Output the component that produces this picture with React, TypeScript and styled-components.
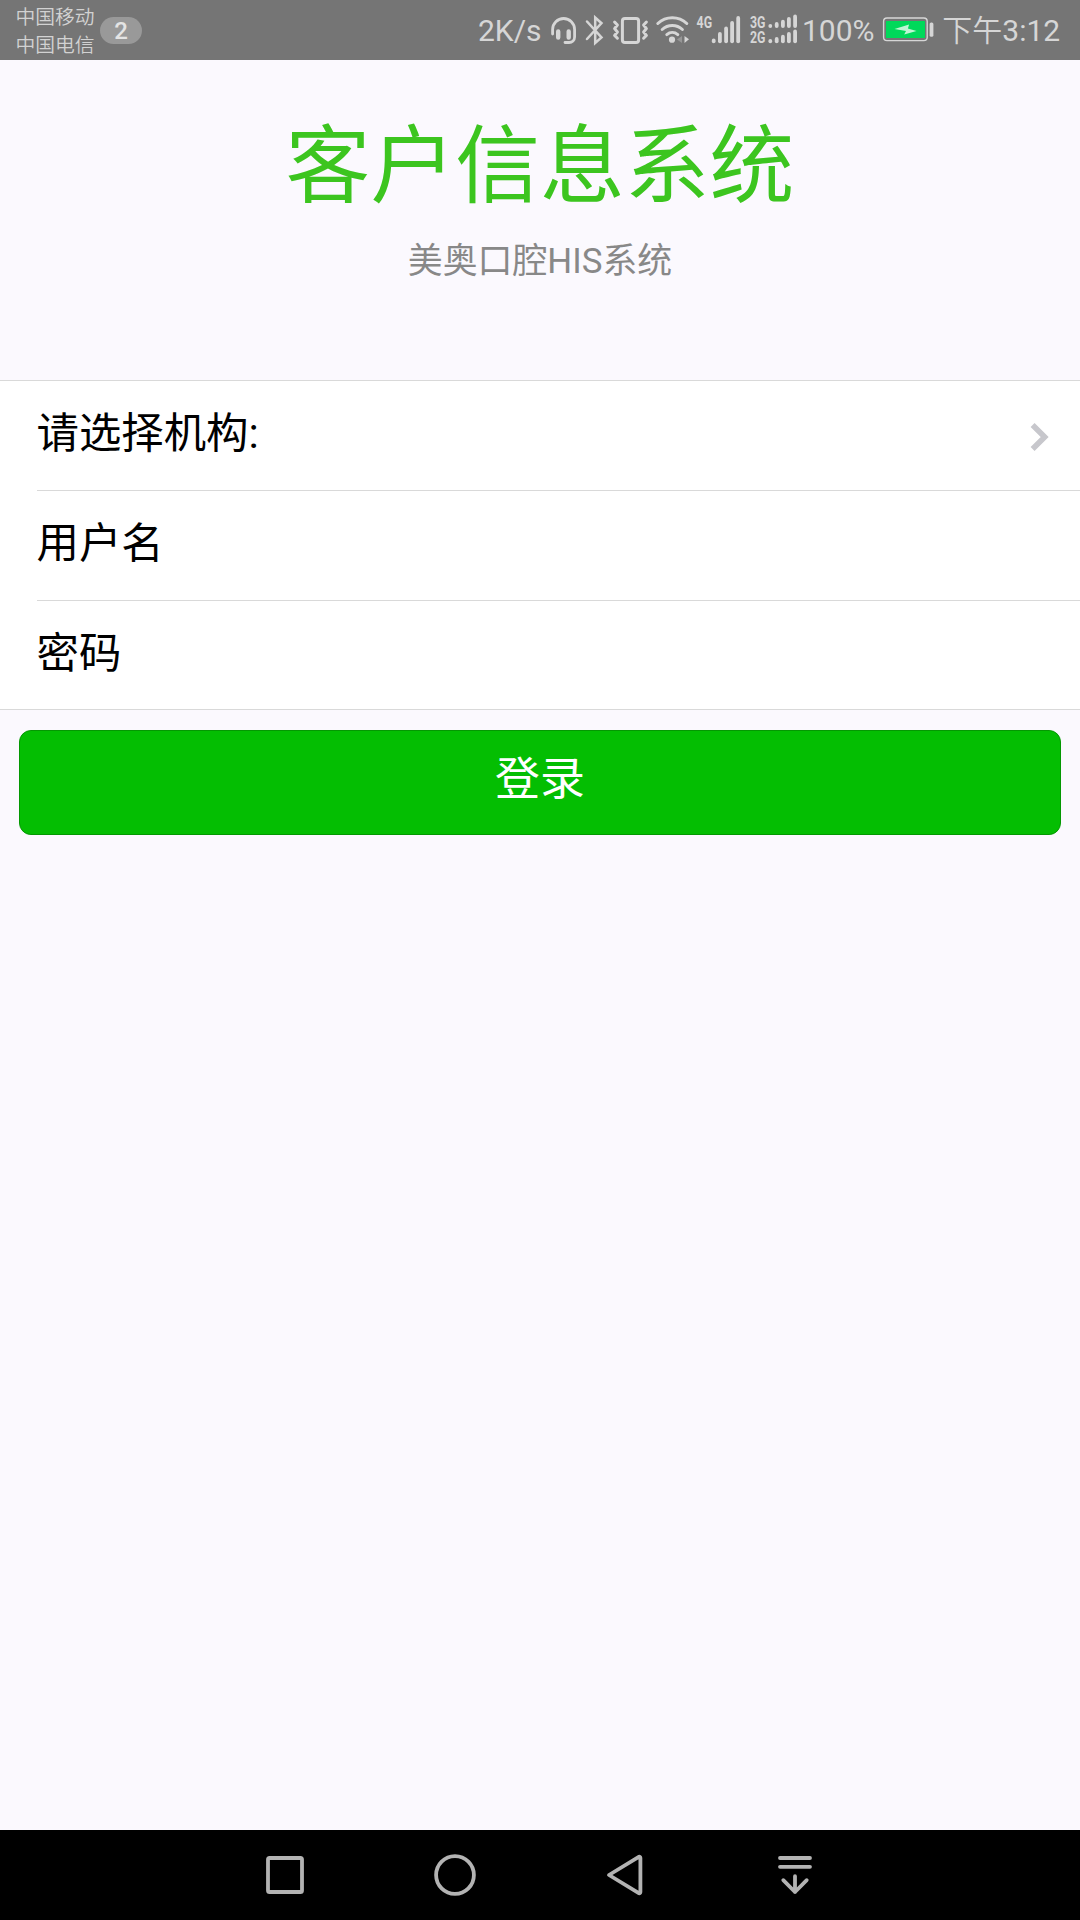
import React from "react";
import styled, { createGlobalStyle } from "styled-components";

const GlobalStyle = createGlobalStyle`
  * { box-sizing: border-box; }
  html, body { margin: 0; padding: 0; background: #fbf9fe; }
  body { font-family: Roboto, "Noto Sans CJK SC", sans-serif; font-weight: 400; }
`;

const Screen = styled.div`
  width: 1080px;
  height: 1920px;
  display: flex;
  flex-direction: column;
  overflow: hidden;
  background: #fbf9fe;
`;

const StatusBar = styled.header`
  height: 60px;
  flex: none;
  display: flex;
  align-items: center;
  background: #757575;
  color: #d6d6d6;
`;

const Carriers = styled.div`
  width: 85px;
  padding: 4px 0 0 15.5px;
  flex: none;
  font-size: 19.8px;
  line-height: 28px;
  font-weight: 350;
  white-space: nowrap;
  color: #d2d2d2;
`;

const CountPill = styled.span`
  width: 42px;
  height: 27px;
  margin-left: 15px;
  border-radius: 14px;
  background: #999;
  color: #e4e4e4;
  font-size: 24px;
  font-weight: 500;
  line-height: 29px;
  text-align: center;
`;

const Indicators = styled.div`
  margin-left: auto;
  width: 602px;
  display: flex;
  align-items: center;
`;

const StatusText = styled.span<{ $width: number; $gap?: number; $light?: boolean }>`
  width: ${(p) => p.$width}px;
  margin-left: ${(p) => p.$gap ?? 0}px;
  flex: none;
  padding-top: 1px;
  font-size: 30px;
  line-height: 60px;
  font-weight: ${(p) => (p.$light ? 350 : 400)};
  white-space: nowrap;
`;

const Digits = styled.span`
  font-weight: 400;
`;

const StatusIcon = styled.svg<{ $gap?: number }>`
  flex: none;
  margin-left: ${(p) => p.$gap ?? 0}px;
  color: #d6d6d6;
  font-family: Roboto, sans-serif;
  font-weight: 700;
`;

const Page = styled.main`
  flex: 1;
  display: flex;
  flex-direction: column;
`;

const Heading = styled.div`
  height: 320px;
  padding-top: 57px;
  text-align: center;
`;

const Title = styled.h1`
  margin: 0;
  font-size: 84.8px;
  line-height: 100px;
  font-weight: 400;
  color: #3cc51f;
`;

const Subtitle = styled.p`
  margin: 19px 0 0;
  font-size: 34.9px;
  line-height: 52px;
  color: #888;
`;

const Cells = styled.div`
  background: #fff;
  border-top: 1px solid #d9d9d9;
  border-bottom: 1px solid #d9d9d9;
`;

const Cell = styled.div<{ $height: number; $divided?: boolean }>`
  height: ${(p) => p.$height}px;
  margin-left: 36.5px;
  padding-right: 30.5px;
  display: flex;
  align-items: center;
  justify-content: space-between;
  border-bottom: ${(p) => (p.$divided ? "1px solid #d9d9d9" : "none")};
`;

const Label = styled.span`
  font-size: 42.4px;
  line-height: 60px;
  padding-bottom: 3px;
  color: #000;
`;

const Chevron = styled.svg`
  margin-top: 3px;
`;

const LoginButton = styled.button`
  height: 105px;
  margin: 20px 19px 0;
  padding: 0 0 5px;
  border: 1px solid #049802;
  border-radius: 12px;
  background: #04be02;
  color: #fff;
  font-family: inherit;
  font-weight: 400;
  font-size: 44.9px;
  line-height: 60px;
`;

const NavBar = styled.nav`
  height: 90px;
  flex: none;
  display: flex;
  justify-content: center;
  background: #000;
`;

const NavItem = styled.div`
  width: 170px;
  display: flex;
  align-items: center;
  justify-content: center;
  color: #b3b3b3;
`;

const NavIcon: React.FC<{ children: React.ReactNode }> = ({ children }) => (
  <NavItem>
    <svg width="48" height="48" viewBox="-24 -24 48 48" fill="none" stroke="currentColor" strokeWidth="3.8" strokeLinejoin="round" strokeLinecap="round">
      {children}
    </svg>
  </NavItem>
);

type Bar = [x: number, top: number];

const Bars: React.FC<{ bars: Bar[]; bottom: number; width: number }> = ({ bars, bottom, width }) => (
  <g fill="currentColor">
    {bars.map(([x, top]) => (
      <rect key={x} x={x} y={top} width={width} height={bottom - top} rx={width / 2} />
    ))}
  </g>
);

export default function App() {
  return (
    <>
      <GlobalStyle />
      <Screen>
        <StatusBar>
          <Carriers>
            <div>中国移动</div>
            <div>中国电信</div>
          </Carriers>
          <CountPill>2</CountPill>
          <Indicators>
            <StatusText $width={72}>2K/s</StatusText>
            <StatusIcon width="28" height="60" viewBox="550 0 28 60" fill="none" stroke="currentColor" strokeWidth="2.8" strokeLinecap="round">
              <path d="M552.6 34V29.5a11 11 0 0 1 22 0V37a5.5 5.5 0 0 1-5.5 5.5H565" />
              <path d="M558.2 31.5v6M568.7 31.5v6" strokeWidth="4.4" />
            </StatusIcon>
            <StatusIcon $gap={6} width="22" height="60" viewBox="584 0 22 60" fill="none" stroke="currentColor" strokeWidth="2.5" strokeLinecap="round" strokeLinejoin="miter">
              <path d="M587 21.5L601.5 37.5L595.2 43V17.5L601.5 23.2L587 39" />
            </StatusIcon>
            <StatusIcon $gap={6} width="37" height="60" viewBox="612 0 37 60" fill="none" stroke="currentColor" strokeWidth="3" strokeLinecap="round" strokeLinejoin="round">
              <rect x="622.4" y="18.4" width="16.2" height="24.2" rx="2.6" />
              <path d="M614.6 22l2.8 3-2.8 3.6 2.8 3.4-2.8 3.4 2.8 2.8M646.4 22l-2.8 3 2.8 3.6-2.8 3.4 2.8 3.4-2.8 2.8" />
            </StatusIcon>
            <StatusIcon $gap={6} width="36" height="60" viewBox="655 0 36 60" fill="none" stroke="currentColor" strokeWidth="3" strokeLinecap="round">
              <path d="M657.8 23.5a21 21 0 0 1 29 0M662.2 29.5a15 15 0 0 1 20.2 0M666.8 34.6a8.6 8.6 0 0 1 11 0" />
              <circle cx="672" cy="39.7" r="3.1" fill="currentColor" stroke="none" />
              <path d="M682 36v7l-5-3.5z" fill="#969696" stroke="none" />
              <path d="M684.5 36v7l4.5-3.8z" fill="currentColor" stroke="none" />
            </StatusIcon>
            <StatusIcon $gap={4} width="47" height="60" viewBox="695 0 47 60">
              <text x="696.6" y="28" fontSize="16.5" fill="currentColor" textLength="15.5" lengthAdjust="spacingAndGlyphs">4G</text>
              <Bars width={3.8} bottom={43.2} bars={[[711.8, 38.6], [718, 32], [724.2, 26.5], [730.2, 21], [736.3, 16]]} />
            </StatusIcon>
            <StatusIcon $gap={6} width="52" height="60" viewBox="748 0 52 60">
              <text x="750" y="27.8" fontSize="16.5" fill="currentColor" textLength="15.5" lengthAdjust="spacingAndGlyphs">3G</text>
              <text x="750" y="42.8" fontSize="16.5" fill="currentColor" textLength="15.5" lengthAdjust="spacingAndGlyphs">2G</text>
              <Bars width={3.8} bottom={28} bars={[[768.4, 24], [774.8, 22], [781, 19.8], [787, 17], [793.2, 14.6]]} />
              <Bars width={3.8} bottom={43.2} bars={[[768.4, 39], [774.8, 37], [781, 34.8], [787, 32], [793.2, 29.6]]} />
            </StatusIcon>
            <StatusText $gap={2} $width={80}>100%</StatusText>
            <StatusIcon width="53" height="60" viewBox="882 0 53 60">
              <rect x="883.6" y="18" width="43.6" height="22.6" rx="3.4" fill="none" stroke="currentColor" strokeWidth="1.4" />
              <rect x="886" y="21" width="39" height="17" rx="0.6" fill="#00d95a" />
              <path d="M894.5 28.9L906 31l-1.8 3.6L916.5 31l-8.6-2.4 1.2-4.2z" fill="#bff5d4" />
              <rect x="929.6" y="22.4" width="3.8" height="14.4" rx="1.6" fill="currentColor" />
            </StatusIcon>
            <StatusText $width={125} $light>&nbsp;下午<Digits>3:12</Digits></StatusText>
          </Indicators>
        </StatusBar>
        <Page>
          <Heading>
            <Title>客户信息系统</Title>
            <Subtitle>美奥口腔HIS系统</Subtitle>
          </Heading>
          <Cells>
            <Cell $height={110} $divided>
              <Label>请选择机构:</Label>
              <Chevron width="20" height="32" viewBox="1030 421.5 20 32" fill="none" stroke="#c7c7cc" strokeWidth="5.6">
                <path d="M1032.6 425.4L1044.7 437.5L1032.6 449.6" />
              </Chevron>
            </Cell>
            <Cell $height={110} $divided>
              <Label>用户名</Label>
            </Cell>
            <Cell $height={108}>
              <Label>密码</Label>
            </Cell>
          </Cells>
          <LoginButton>登录</LoginButton>
        </Page>
        <NavBar>
          <NavIcon>
            <rect x="-17" y="-17" width="34" height="34" rx="1.6" />
          </NavIcon>
          <NavIcon>
            <circle r="18.9" />
          </NavIcon>
          <NavIcon>
            <path d="M-16 0L13.8 -18.2Q15.4 -18.6 15.4 -17V17Q15.4 18.6 13.8 18.2Z" />
          </NavIcon>
          <NavIcon>
            <path d="M-15 -17H15M-15 -8.2H15M0 1.2V17M-11.7 5.2L0 17L11.7 5.2" />
          </NavIcon>
        </NavBar>
      </Screen>
    </>
  );
}
